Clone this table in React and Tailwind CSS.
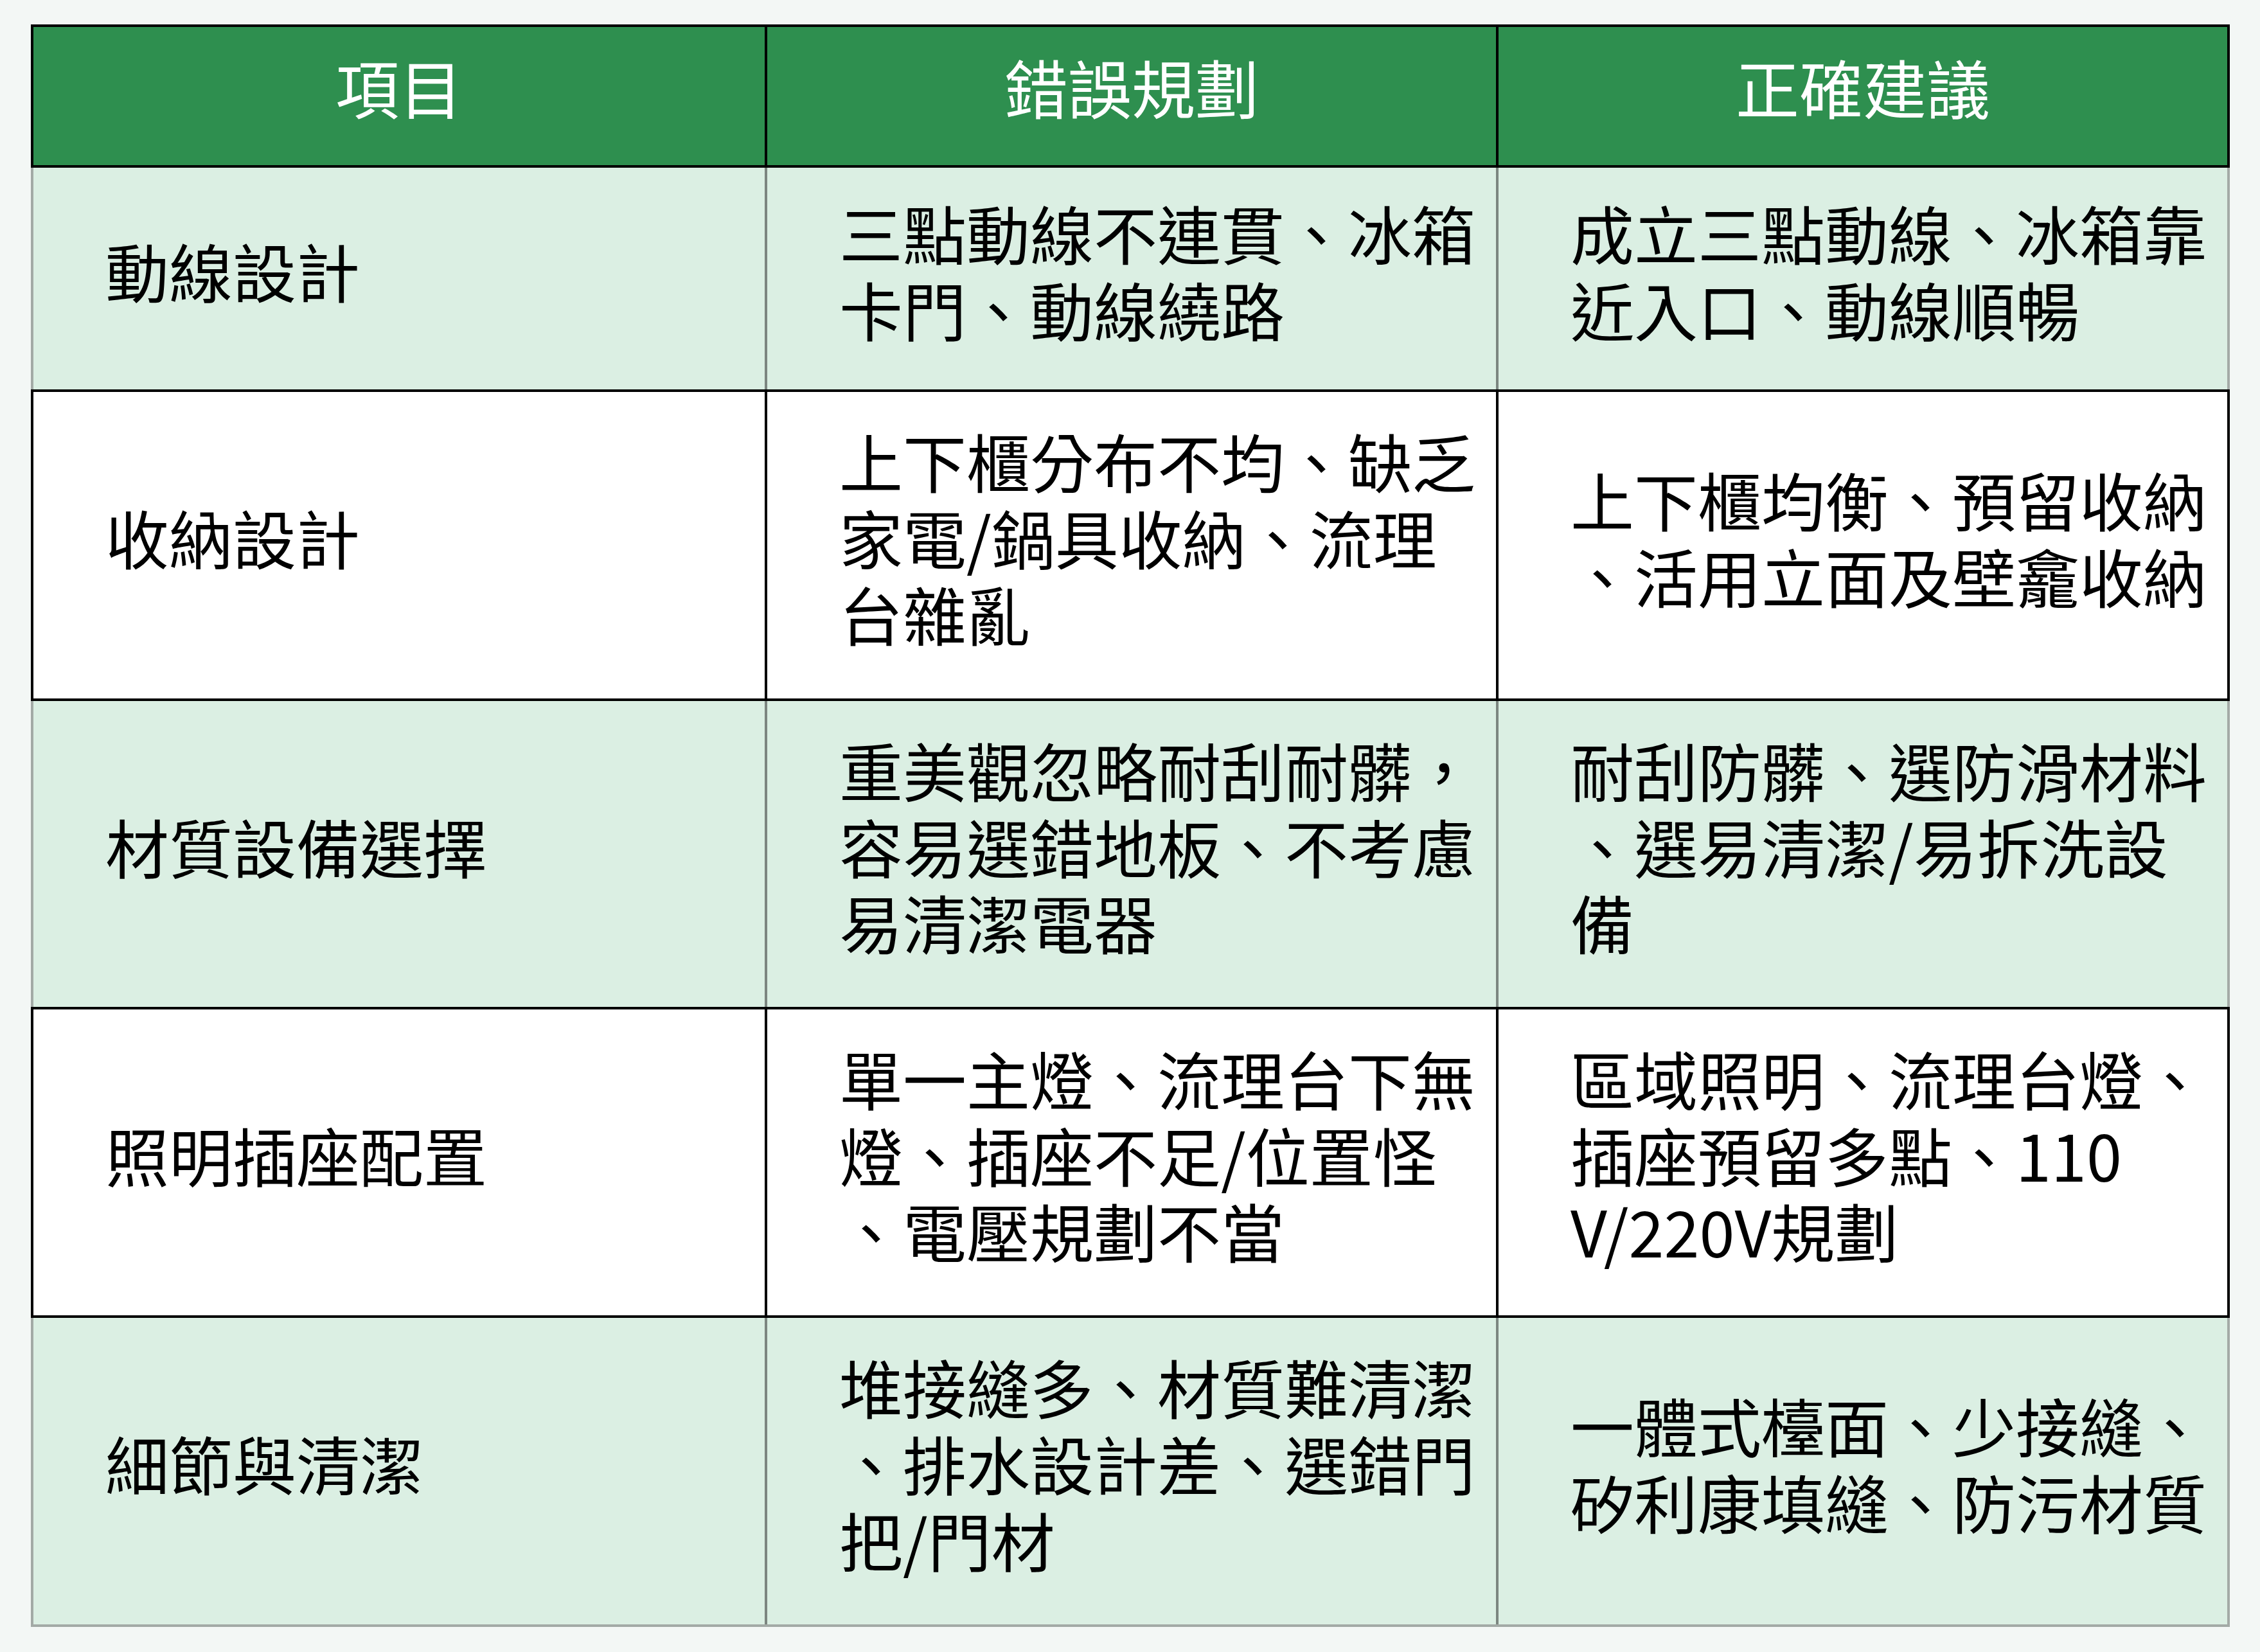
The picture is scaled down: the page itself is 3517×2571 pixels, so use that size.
const rows = [
  {
    tone: "green",
    h: "h-[345px]",
    item: "動線設計",
    wrong: ["三點動線不連貫、冰箱", "卡門、動線繞路"],
    right: ["成立三點動線、冰箱靠", "近入口、動線順暢"],
  },
  {
    tone: "white",
    h: "h-[485px]",
    item: "收納設計",
    wrong: ["上下櫃分布不均、缺乏", "家電/鍋具收納、流理", "台雜亂"],
    right: ["上下櫃均衡、預留收納", "、活用立面及壁龕收納"],
  },
  {
    tone: "green",
    h: "h-[476px]",
    item: "材質設備選擇",
    wrong: ["重美觀忽略耐刮耐髒，", "容易選錯地板、不考慮", "易清潔電器"],
    right: ["耐刮防髒、選防滑材料", "、選易清潔/易拆洗設", "備"],
  },
  {
    tone: "white",
    h: "h-[484px]",
    item: "照明插座配置",
    wrong: ["單一主燈、流理台下無", "燈、插座不足/位置怪", "、電壓規劃不當"],
    right: ["區域照明、流理台燈、", "插座預留多點、110", "V/220V規劃"],
  },
  {
    tone: "green",
    h: "h-[481px]",
    item: "細節與清潔",
    wrong: ["堆接縫多、材質難清潔", "、排水設計差、選錯門", "把/門材"],
    right: ["一體式檯面、少接縫、", "矽利康填縫、防污材質"],
  },
];

const Cell = ({ lines, divider }) => (
  <div className={`flex items-center pb-[26px] pl-[112px] ${divider}`}>
    <div className="text-[99px] leading-[1.2] text-black whitespace-nowrap">
      {lines.map((l, i) => (
        <div key={i}>{l}</div>
      ))}
    </div>
  </div>
);

const Row = ({ row, last }) => {
  const green = row.tone === "green";
  const box = green
    ? `bg-[#dbefe3] border-x-4 border-[#a3aaa6] ${last ? "border-b-4" : ""}`
    : "bg-white border-4 border-black";
  const divider = green ? "border-l-4 border-[#7c8680]" : "border-l-4 border-black";
  return (
    <div className={`grid grid-cols-3 ${row.h} ${box}`}>
      <Cell lines={[row.item]} divider="" />
      <Cell lines={row.wrong} divider={divider} />
      <Cell lines={row.right} divider={divider} />
    </div>
  );
};

export default function App() {
  return (
    <div className="min-h-screen w-[3517px] h-[2571px] bg-[#f3f7f5] pl-[48px] pt-[38px] font-['Noto_Sans_CJK_TC','Noto_Sans',sans-serif]">
      <div className="flex w-[3422px] flex-col">
        <div className="grid h-[223px] grid-cols-3 border-4 border-black bg-[#2e8f4f] text-[99px] leading-[1.2] text-white">
          <div className="flex items-center justify-center pb-[30px]">項目</div>
          <div className="flex items-center justify-center border-l-4 border-black pb-[30px]">錯誤規劃</div>
          <div className="flex items-center justify-center border-l-4 border-black pb-[30px]">正確建議</div>
        </div>
        {rows.map((r, i) => (
          <Row key={i} row={r} last={i === rows.length - 1} />
        ))}
      </div>
    </div>
  );
}
